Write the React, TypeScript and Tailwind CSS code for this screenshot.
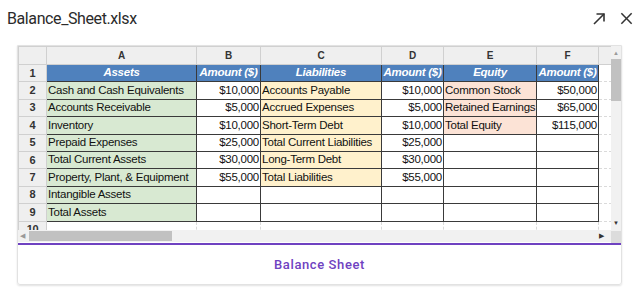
import React from 'react'

type Row = {
  a?: string
  b?: string
  c?: string
  d?: string
  e?: string
  f?: string
}

const rows: Row[] = [
  { a: 'Cash and Cash Equivalents', b: '$10,000', c: 'Accounts Payable', d: '$10,000', e: 'Common Stock', f: '$50,000' },
  { a: 'Accounts Receivable', b: '$5,000', c: 'Accrued Expenses', d: '$5,000', e: 'Retained Earnings', f: '$65,000' },
  { a: 'Inventory', b: '$10,000', c: 'Short-Term Debt', d: '$10,000', e: 'Total Equity', f: '$115,000' },
  { a: 'Prepaid Expenses', b: '$25,000', c: 'Total Current Liabilities', d: '$25,000' },
  { a: 'Total Current Assets', b: '$30,000', c: 'Long-Term Debt', d: '$30,000' },
  { a: 'Property, Plant, & Equipment', b: '$55,000', c: 'Total Liabilities', d: '$55,000' },
  { a: 'Intangible Assets' },
  { a: 'Total Assets' },
]

const headers = ['Assets', 'Amount ($)', 'Liabilities', 'Amount ($)', 'Equity', 'Amount ($)']

const cell = 'border border-[#3a3a3a] px-[1px] whitespace-nowrap overflow-hidden h-[17.4px] leading-none'
const rowNum = 'border border-[#d0d0d0] bg-[#efefef] text-center text-[11px] font-bold text-[#333] h-[17.4px] leading-none'
const extra = 'border border-dashed border-[#dadada] border-l-[#3a3a3a]'

export default function App() {
  return (
    <div className="w-[640px] h-[297px] bg-white overflow-hidden" style={{ fontFamily: 'Roboto, sans-serif' }}>
      {/* Title bar */}
      <div className="flex items-center justify-between h-[36px] pl-[7px] pr-[6px] pt-[1px]">
        <span className="text-[16px] text-[#2b2b2b] tracking-[-0.4px]">Balance_Sheet.xlsx</span>
        <div className="flex items-center gap-[12px] text-[#333]">
          <svg width="16" height="16" viewBox="0 0 16 16" fill="none" stroke="currentColor" strokeWidth="1.6">
            <path d="M3 13 L13 3" />
            <path d="M5.5 3 H13 V10.5" />
          </svg>
          <svg width="15" height="15" viewBox="0 0 16 16" fill="none" stroke="currentColor" strokeWidth="1.6">
            <path d="M2.5 2.5 L13.5 13.5" />
            <path d="M13.5 2.5 L2.5 13.5" />
          </svg>
        </div>
      </div>

      {/* Card */}
      <div className="ml-[17px] mt-[9px] w-[605px] border border-[#e2e2e2] rounded-b-[3px] shadow-[0_1px_2px_rgba(0,0,0,0.12)]">
        <div className="flex h-[197px]">
          <div className="flex flex-col w-[593px]">
            <div className="h-[184px] overflow-hidden bg-white" style={{ fontFamily: '"Liberation Sans", Arial, sans-serif' }}>
              <table className="table-fixed w-[593px] border-collapse text-[11.5px] tracking-[-0.25px] text-[#111]">
                <colgroup>
                  <col className="w-[28px]" />
                  <col className="w-[150px]" />
                  <col className="w-[64px]" />
                  <col className="w-[121px]" />
                  <col className="w-[62px]" />
                  <col className="w-[93px]" />
                  <col className="w-[62px]" />
                  <col className="w-[13px]" />
                </colgroup>
                <thead>
                  <tr>
                    <th className="border border-[#d0d0d0] bg-[#efefef] h-[18px]" />
                    {['A', 'B', 'C', 'D', 'E', 'F'].map(l => (
                      <th key={l} className="border border-[#d0d0d0] bg-[#efefef] h-[18px] text-[10px] font-bold text-[#333] leading-none tracking-normal">
                        {l}
                      </th>
                    ))}
                    <th className="border border-[#d0d0d0] bg-[#efefef]" />
                  </tr>
                </thead>
                <tbody>
                  <tr>
                    <td className={rowNum}>1</td>
                    {headers.map((h, i) => (
                      <td key={i} className={`${cell} bg-[#4f81bd] text-white font-bold italic text-center`}>
                        {h}
                      </td>
                    ))}
                    <td className={extra} />
                  </tr>
                  {rows.map((r, i) => (
                    <tr key={i}>
                      <td className={rowNum}>{i + 2}</td>
                      <td className={`${cell} bg-[#d8e9d2]`}>{r.a}</td>
                      <td className={`${cell} text-right`}>{r.b}</td>
                      <td className={`${cell} ${i < 6 ? 'bg-[#fff1cc]' : ''}`}>{r.c}</td>
                      <td className={`${cell} text-right`}>{r.d}</td>
                      <td className={`${cell} ${i < 3 ? 'bg-[#fce3d6]' : ''}`}>{r.e}</td>
                      <td className={`${cell} text-right`}>{r.f}</td>
                      <td className={extra} />
                    </tr>
                  ))}
                  <tr>
                    <td className="border border-[#d0d0d0] bg-[#efefef] text-center text-[11px] font-bold text-[#333] h-[17.4px] leading-none align-top pt-[2px]">
                      10
                    </td>
                    {[0, 1, 2, 3, 4, 5, 6].map(k => (
                      <td key={k} className="border border-dashed border-[#dadada] border-t-[#3a3a3a] h-[17.4px]" />
                    ))}
                  </tr>
                </tbody>
              </table>
            </div>
            {/* Horizontal scrollbar */}
            <div className="flex items-center h-[12px] bg-[#f1f1f1] px-[2px] gap-[4px]">
              <span className="text-[7px] text-[#9a9a9a] leading-none">◀</span>
              <div className="h-[10px] w-[143px] bg-[#c1c1c1]" />
              <div className="flex-1" />
              <span className="text-[7px] text-[#333] leading-none pr-[5px]">▶</span>
            </div>
          </div>
          {/* Vertical scrollbar */}
          <div className="flex flex-col w-[12px] bg-[#f1f1f1]">
            <div className="flex flex-col items-center flex-1 pt-[4px]">
              <span className="text-[6px] text-[#9a9a9a] leading-none">▲</span>
              <div className="mt-[3px] w-[10px] h-[42px] bg-[#c1c1c1]" />
              <div className="flex-1" />
              <span className="text-[6px] text-[#333] leading-none pb-[5px]">▼</span>
            </div>
            <div className="h-[12px] bg-[#dcdcdc]" />
          </div>
        </div>
        <div className="h-[2px] bg-[#6f42c1]" />
        <div className="flex items-center justify-center h-[39px]">
          <span className="text-[13px] font-medium text-[#6f42c1] tracking-[0.6px]">Balance Sheet</span>
        </div>
      </div>
    </div>
  )
}
